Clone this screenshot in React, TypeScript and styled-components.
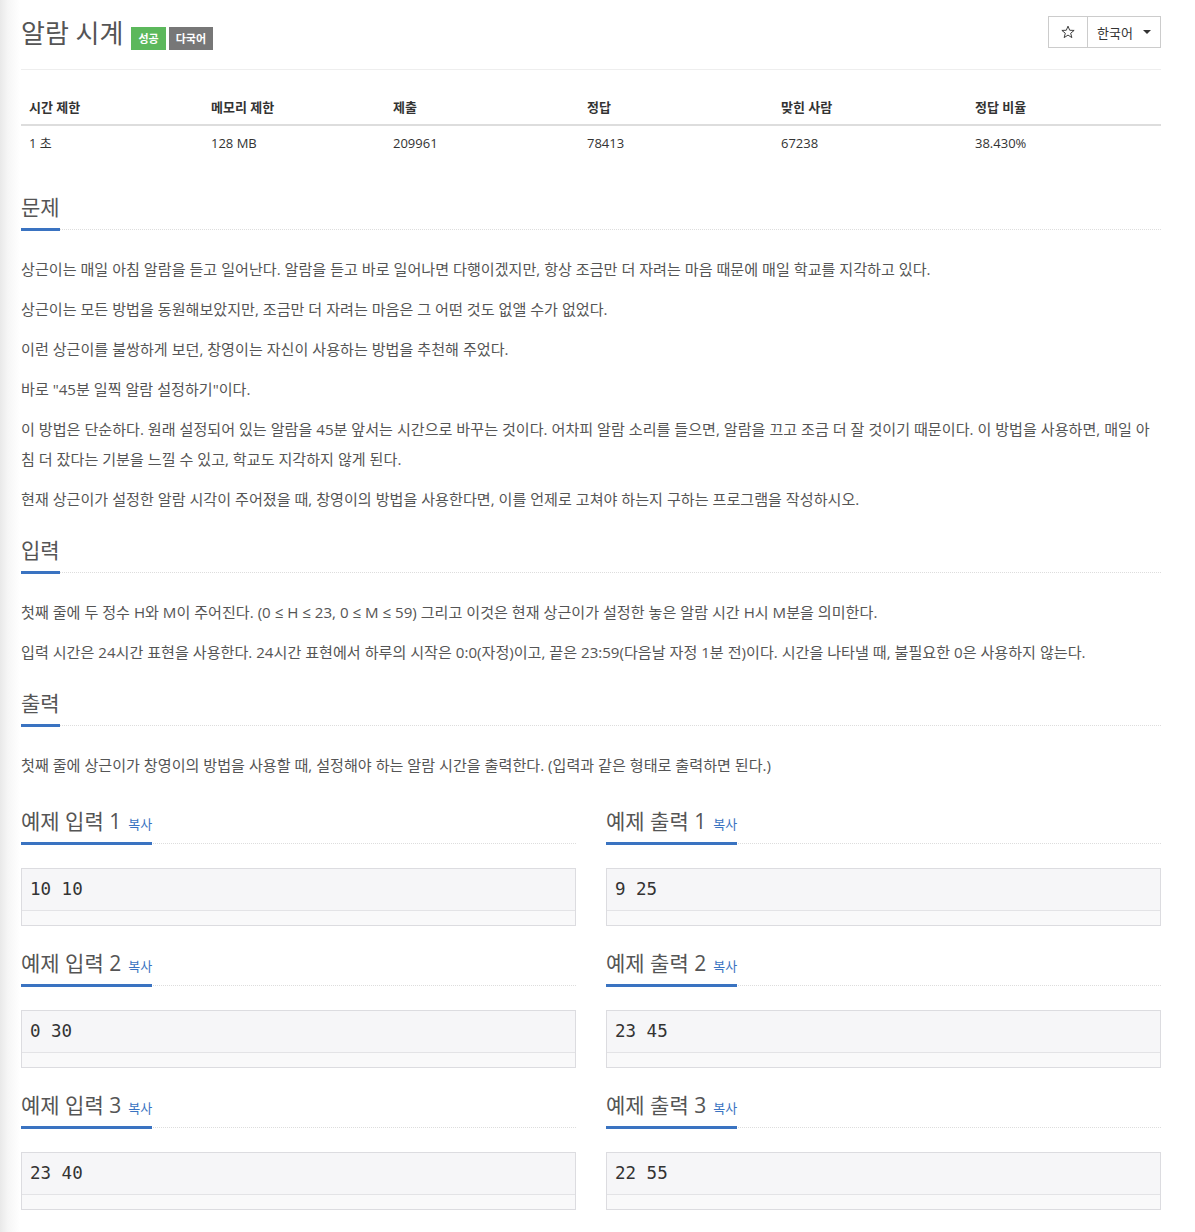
import React from 'react';
import styled, { createGlobalStyle } from 'styled-components';

const GlobalStyle = createGlobalStyle`
  body {
    margin: 0;
    background: linear-gradient(to right, #e9e9e9 0, #f6f6f6 8px, #ffffff 20px) no-repeat;
    background-color: #fff;
    font-family: "Open Sans", "Noto Sans CJK KR", sans-serif;
    color: #333;
  }
`;

const Page = styled.div`
  width: 1140px;
  padding: 0 0 20px 21px;
`;

const TitleBar = styled.div`
  display: flex;
  align-items: flex-start;
  justify-content: space-between;
  height: 69px;
  border-bottom: 1px solid #eee;
`;

const Title = styled.h1`
  margin: 14px 0 0;
  font-size: 26px;
  font-weight: 400;
  line-height: 38px;
  color: #555;
  display: flex;
  align-items: baseline;
  gap: 3px;
`;

const TitleText = styled.span`
  margin-right: 5px;
`;

const Label = styled.span<{ $color: string }>`
  display: inline-block;
  padding: 0 7px;
  height: 23px;
  line-height: 23px;
  font-size: 11px;
  font-weight: 700;
  color: #fff;
  background: ${p => p.$color};
`;

const BtnGroup = styled.div`
  display: flex;
  margin-top: 16px;
`;

const Btn = styled.button<{ $w: number }>`
  width: ${p => p.$w}px;
  height: 32px;
  border: 1px solid #ccc;
  background: #fff;
  font-family: "Open Sans", "Noto Sans CJK KR", sans-serif;
  font-size: 13px;
  color: #333;
  display: flex;
  align-items: center;
  justify-content: center;
  gap: 10px;
  padding: 0;
  & + & {
    margin-left: -1px;
  }
`;

const Caret = styled.span`
  width: 0;
  height: 0;
  border-left: 4px solid transparent;
  border-right: 4px solid transparent;
  border-top: 4px solid #333;
`;

const Table = styled.table`
  width: 1140px;
  margin-top: 20px;
  border-collapse: collapse;
  table-layout: fixed;
  font-size: 13px;
  color: #333;
`;

const Th = styled.th<{ $w: number }>`
  box-sizing: border-box;
  width: ${p => p.$w}px;
  text-align: left;
  font-weight: 700;
  padding: 8px;
  line-height: 18px;
  border-bottom: 2px solid #ddd;
`;

const Td = styled.td`
  padding: 8px;
  line-height: 18px;
`;

const Section = styled.section<{ $top: number }>`
  margin-top: ${p => p.$top}px;
`;

const HeadLine = styled.div`
  display: flex;
  border-bottom: 1px dotted #ddd;
`;

const H2 = styled.h2`
  margin: 0 0 -2px;
  padding-bottom: 6px;
  font-size: 21px;
  font-weight: 400;
  line-height: 30px;
  color: #555;
  border-bottom: 3px solid #3a73c1;
  display: flex;
  align-items: baseline;
  gap: 7px;
`;

const Copy = styled.span`
  font-size: 13px;
  line-height: 1;
  color: #3a73c1;
`;

const Body = styled.div`
  margin-top: 24px;
`;

const P = styled.p`
  margin: 0 0 10px;
  font-size: 15.1px;
  line-height: 30px;
  color: #555;
  word-break: break-all;
`;

const SampleGrid = styled.div`
  display: grid;
  grid-template-columns: 555px 555px;
  column-gap: 30px;
  margin-top: 26px;
`;

const Sample = styled.div`
  margin-bottom: 22px;
`;

const Box = styled.div`
  margin-top: 24px;
  border: 1px solid #dcdce0;
  background: #f9f9fa;
`;

const Pre = styled.pre`
  margin: 0;
  padding: 10px 8px;
  height: 21px;
  line-height: 21px;
  font-family: "DejaVu Sans Mono", monospace;
  font-size: 17.5px;
  color: #333;
  background: #f6f6f8;
  border-bottom: 1px solid #e3e3e6;
`;

const BoxFoot = styled.div`
  height: 14px;
`;

const samples = [
  { n: 1, input: '10 10', output: '9 25' },
  { n: 2, input: '0 30', output: '23 45' },
  { n: 3, input: '23 40', output: '22 55' },
];

const cols = [
  { label: '시간 제한', value: '1 초', w: 182 },
  { label: '메모리 제한', value: '128 MB', w: 182 },
  { label: '제출', value: '209961', w: 194 },
  { label: '정답', value: '78413', w: 194 },
  { label: '맞힌 사람', value: '67238', w: 194 },
  { label: '정답 비율', value: '38.430%', w: 194 },
];

const Star = () => (
  <svg width="14" height="14" viewBox="0 0 24 24" fill="none" stroke="#333" strokeWidth="1.6" strokeLinejoin="miter">
    <polygon points="12,2 14.9,9 22.5,9.3 16.6,14.1 18.6,21.6 12,17.3 5.4,21.6 7.4,14.1 1.5,9.3 9.1,9" />
  </svg>
);

const SampleBlock: React.FC<{ title: string; text: string }> = ({ title, text }) => (
  <Sample>
    <HeadLine>
      <H2>
        {title}
        <Copy>복사</Copy>
      </H2>
    </HeadLine>
    <Box>
      <Pre>{text}</Pre>
      <BoxFoot />
    </Box>
  </Sample>
);

const App: React.FC = () => {
  return (
    <Page>
      <GlobalStyle />
      <TitleBar>
        <Title>
          <TitleText>알람 시계</TitleText>
          <Label $color="#5cb85c">성공</Label>
          <Label $color="#777">다국어</Label>
        </Title>
        <BtnGroup>
          <Btn $w={40}><Star /></Btn>
          <Btn $w={74}>한국어<Caret /></Btn>
        </BtnGroup>
      </TitleBar>

      <Table>
        <thead>
          <tr>
            {cols.map(c => <Th key={c.label} $w={c.w}>{c.label}</Th>)}
          </tr>
        </thead>
        <tbody>
          <tr>
            {cols.map(c => <Td key={c.label}>{c.value}</Td>)}
          </tr>
        </tbody>
      </Table>

      <Section $top={32}>
        <HeadLine><H2>문제</H2></HeadLine>
        <Body>
          <P>상근이는 매일 아침 알람을 듣고 일어난다. 알람을 듣고 바로 일어나면 다행이겠지만, 항상 조금만 더 자려는 마음 때문에 매일 학교를 지각하고 있다.</P>
          <P>상근이는 모든 방법을 동원해보았지만, 조금만 더 자려는 마음은 그 어떤 것도 없앨 수가 없었다.</P>
          <P>이런 상근이를 불쌍하게 보던, 창영이는 자신이 사용하는 방법을 추천해 주었다.</P>
          <P>바로 "45분 일찍 알람 설정하기"이다.</P>
          <P>이 방법은 단순하다. 원래 설정되어 있는 알람을 45분 앞서는 시간으로 바꾸는 것이다. 어차피 알람 소리를 들으면, 알람을 끄고 조금 더 잘 것이기 때문이다. 이 방법을 사용하면, 매일 아침 더 잤다는 기분을 느낄 수 있고, 학교도 지각하지 않게 된다.</P>
          <P>현재 상근이가 설정한 알람 시각이 주어졌을 때, 창영이의 방법을 사용한다면, 이를 언제로 고쳐야 하는지 구하는 프로그램을 작성하시오.</P>
        </Body>
      </Section>

      <Section $top={21}>
        <HeadLine><H2>입력</H2></HeadLine>
        <Body>
          <P>첫째 줄에 두 정수 H와 M이 주어진다. (0 ≤ H ≤ 23, 0 ≤ M ≤ 59) 그리고 이것은 현재 상근이가 설정한 놓은 알람 시간 H시 M분을 의미한다.</P>
          <P>입력 시간은 24시간 표현을 사용한다. 24시간 표현에서 하루의 시작은 0:0(자정)이고, 끝은 23:59(다음날 자정 1분 전)이다. 시간을 나타낼 때, 불필요한 0은 사용하지 않는다.</P>
        </Body>
      </Section>

      <Section $top={21}>
        <HeadLine><H2>출력</H2></HeadLine>
        <Body>
          <P>첫째 줄에 상근이가 창영이의 방법을 사용할 때, 설정해야 하는 알람 시간을 출력한다. (입력과 같은 형태로 출력하면 된다.)</P>
        </Body>
      </Section>

      <SampleGrid>
        {samples.map(s => (
          <React.Fragment key={s.n}>
            <SampleBlock title={`예제 입력 ${s.n}`} text={s.input} />
            <SampleBlock title={`예제 출력 ${s.n}`} text={s.output} />
          </React.Fragment>
        ))}
      </SampleGrid>
    </Page>
  );
};

export default App;
